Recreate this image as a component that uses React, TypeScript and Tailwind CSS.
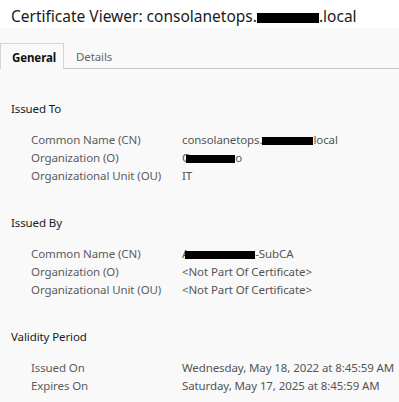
const font = { fontFamily: '"Noto Sans", "Open Sans", sans-serif' }

const Redact = ({ w, h = 8, className = "" }: { w: number; h?: number; className?: string }) => (
    <span
        className={`inline-block bg-black align-middle ${className}`}
        style={{ width: w, height: h }}
    />
)

const Row = ({ label, children }: { label: string; children: React.ReactNode }) => (
    <div className="flex h-[18px] items-center">
        <div className="w-[151px] shrink-0 text-[#5c5c5c]">{label}</div>
        <div className="whitespace-nowrap text-[#555555]">{children}</div>
    </div>
)

const Section = ({ title, first, children }: { title: string; first?: boolean; children: React.ReactNode }) => (
    <section className={first ? "pt-[31px]" : "pt-[29px]"}>
        <h2 className="h-[18px] pl-[11px] leading-[18px] text-[#1a1a1a]">
            {title}
        </h2>
        <div className="mt-[13px] pl-[31px]">{children}</div>
    </section>
)

export default function App() {
    return (
        <div className="h-[402px] w-[399px] overflow-hidden bg-[#f9f9f9] text-[11.5px] tracking-[-0.1px]" style={font}>
            <header className="flex h-[28px] items-center bg-white pl-[11px] pt-[5px] text-[15.5px] tracking-normal text-[#1b1b1b]">
                <span className="whitespace-nowrap">
                    Certificate Viewer: consolanetops.
                    <Redact w={62} h={10} />
                    .local
                </span>
            </header>

            <div className="mt-[15px] flex h-[26px] border-b border-[#c6c6c6]">
                <div className="flex h-[26px] w-[64px] items-center border border-b-0 border-[#d4d4d4] bg-[#f9f9f9] pl-[11px] pt-[3px] font-bold text-[#111]">
                    General
                </div>
                <div className="flex items-center pl-[12px] pt-[3px] text-[#666]">Details</div>
            </div>

            <Section title="Issued To" first>
                <Row label="Common Name (CN)">
                    consolanetops.
                    <Redact w={51} />
                    local
                </Row>
                <Row label="Organization (O)">
                    C<Redact w={49} className="-ml-[3px]" />o
                </Row>
                <Row label="Organizational Unit (OU)">IT</Row>
            </Section>

            <Section title="Issued By">
                <Row label="Common Name (CN)">
                    A<Redact w={70} className="-ml-[4px]" />
                    -SubCA
                </Row>
                <Row label="Organization (O)">&lt;Not Part Of Certificate&gt;</Row>
                <Row label="Organizational Unit (OU)">&lt;Not Part Of Certificate&gt;</Row>
            </Section>

            <Section title="Validity Period">
                <Row label="Issued On">Wednesday, May 18, 2022 at 8:45:59 AM</Row>
                <Row label="Expires On">Saturday, May 17, 2025 at 8:45:59 AM</Row>
            </Section>
        </div>
    )
}
